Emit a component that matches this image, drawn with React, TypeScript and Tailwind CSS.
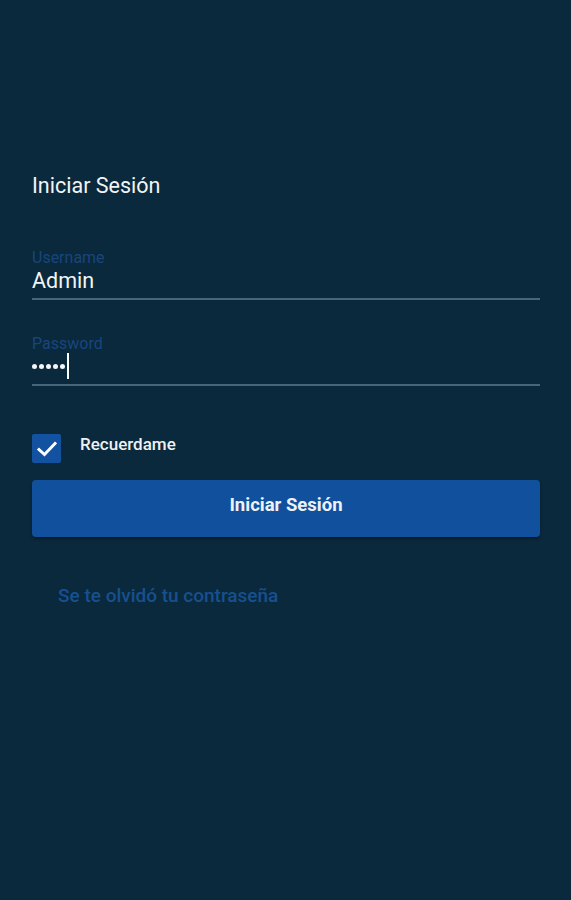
import React from "react";

export default function App() {
  return (
    <div
      className="w-[571px] h-[900px] bg-[#0b293c] text-white"
      style={{ fontFamily: "Roboto, 'Noto Sans', sans-serif" }}
    >
      <div className="pl-8 pr-[31px] pt-[172px]">
        <h1 className="text-[21.5px] leading-[28px] font-normal text-[#f2f4f6]">Iniciar Sesión</h1>

        <div className="mt-[49px]">
          <div className="text-[16px] leading-[18px] text-[#17467c]">Username</div>
          <div className="text-[21.5px] leading-[26px] text-[#f3f5f7] mt-[1px]">Admin</div>
          <div className="h-[2px] bg-[#46667c] mt-[4px]"></div>
        </div>

        <div className="mt-[35px]">
          <div className="text-[16px] leading-[18px] text-[#17467c]">Password</div>
          <div className="flex items-center h-[26px] mt-[0px]">
            <div className="flex items-center gap-[2px]">
              <span className="w-[5px] h-[5px] rounded-full bg-[#f3f5f7]"></span>
              <span className="w-[5px] h-[5px] rounded-full bg-[#f3f5f7]"></span>
              <span className="w-[5px] h-[5px] rounded-full bg-[#f3f5f7]"></span>
              <span className="w-[5px] h-[5px] rounded-full bg-[#f3f5f7]"></span>
              <span className="w-[5px] h-[5px] rounded-full bg-[#f3f5f7]"></span>
            </div>
            <span className="w-[2px] h-[26px] bg-white ml-[2px]"></span>
          </div>
          <div className="h-[2px] bg-[#46667c] mt-[5px]"></div>
        </div>

        <div className="mt-[48px] flex items-start">
          <div className="w-[29px] h-[29px] rounded-[2px] bg-[#1352a0] flex items-center justify-center">
            <svg width="20" height="16" viewBox="0 0 20 16">
              <path d="M2 8.5 L7.5 13.5 L18 2.5" fill="none" stroke="#ffffff" strokeWidth="3" strokeLinecap="square" />
            </svg>
          </div>
          <span className="ml-[19px] text-[17px] leading-[20px] font-medium text-[#eef1f4]">Recuerdame</span>
        </div>

        <button className="mt-[17px] w-full h-[57px] rounded-[4px] bg-[#11509c] text-[18.5px] font-bold text-[#eef2f7] shadow-[0_2px_3px_rgba(0,0,0,0.35)] flex items-center justify-center pb-[6px]">
          Iniciar Sesión
        </button>

        <div className="mt-[47px] pl-[26px] text-[19px] leading-[24px] font-medium text-[#17508f]">
          Se te olvidó tu contraseña
        </div>
      </div>
    </div>
  );
}
